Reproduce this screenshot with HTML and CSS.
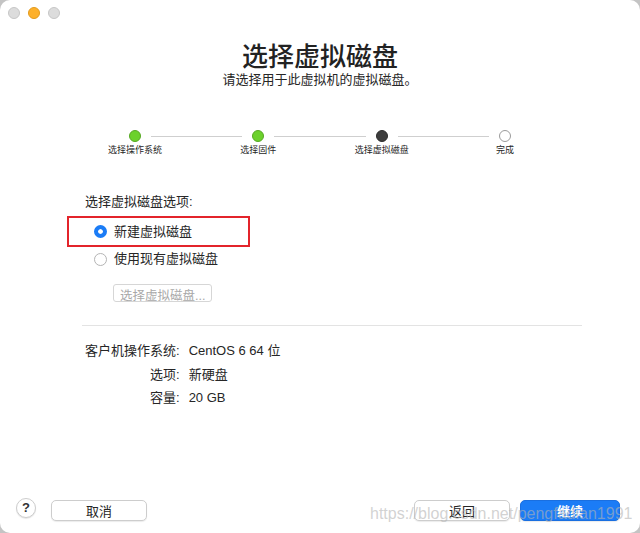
FILE: index.html
```html
<!DOCTYPE html>
<html lang="zh-CN">
<head>
    <meta charset="UTF-8">
    <meta name="viewport" content="width=device-width, initial-scale=1.0">
    <title>选择虚拟磁盘</title>
    <link rel="stylesheet" href="styles.css">
</head>
<body>
<div class="window">
    <div class="titlebar">
        <span class="light"></span>
        <span class="light active"></span>
        <span class="light"></span>
    </div>

    <div class="header">
        <h1>选择虚拟磁盘</h1>
        <p>请选择用于此虚拟机的虚拟磁盘。</p>
    </div>

    <div class="steps">
        <div class="step">
            <span class="dot done"></span>
            <span class="step-label">选择操作系统</span>
        </div>
        <span class="line"></span>
        <div class="step">
            <span class="dot done"></span>
            <span class="step-label">选择固件</span>
        </div>
        <span class="line"></span>
        <div class="step">
            <span class="dot current"></span>
            <span class="step-label">选择虚拟磁盘</span>
        </div>
        <span class="line"></span>
        <div class="step">
            <span class="dot"></span>
            <span class="step-label">完成</span>
        </div>
    </div>

    <div class="options">
        <div class="options-title">选择虚拟磁盘选项:</div>
        <label class="option marked">
            <span class="radio checked"></span>
            新建虚拟磁盘
        </label>
        <label class="option">
            <span class="radio"></span>
            使用现有虚拟磁盘
        </label>
        <button class="pick" disabled>选择虚拟磁盘...</button>
    </div>

    <hr class="divider">

    <div class="summary">
        <span class="key">客户机操作系统:</span><span>CentOS 6 64 位</span>
        <span class="key">选项:</span><span>新硬盘</span>
        <span class="key">容量:</span><span>20 GB</span>
    </div>

    <div class="footer">
        <button class="help">?</button>
        <button class="btn">取消</button>
        <span class="spacer"></span>
        <button class="btn">返回</button>
        <button class="btn primary">继续</button>
    </div>

    <div class="watermark">https://blog.csdn.net/pengfadian1991</div>
</div>
</body>
</html>
```

FILE: styles.css
```css
* {
    box-sizing: border-box;
    margin: 0;
    padding: 0;
}
body {
    width: 640px;
    height: 533px;
    overflow: hidden;
    font-family: "Liberation Sans", "Noto Sans CJK SC", sans-serif;
    color: #262626;
    background-color: #c4c4c4;
}
.window {
    position: relative;
    display: flex;
    flex-direction: column;
    height: 533px;
    background-color: #fff;
    border-radius: 10px;
    overflow: hidden;
}
.titlebar {
    display: flex;
    gap: 8px;
    height: 26px;
    padding: 7px 0 0 8px;
}
.light {
    width: 12px;
    height: 12px;
    border-radius: 50%;
    background-color: #dcdcdc;
    border: 1px solid #c6c6c6;
}
.light.active {
    background-color: #fdb02a;
    border-color: #e29a1c;
}
.header {
    text-align: center;
    padding-top: 16px;
}
.header h1 {
    font-size: 26px;
    font-weight: 500;
    line-height: 30px;
    color: #222;
}
.header p {
    font-size: 13px;
    line-height: 16px;
}
.steps {
    display: flex;
    align-items: flex-start;
    width: 382px;
    margin: 42px 0 0 129px;
}
.step {
    display: flex;
    flex-direction: column;
    align-items: center;
    width: 12px;
}
.dot {
    width: 12px;
    height: 12px;
    border-radius: 50%;
    background-color: #fff;
    border: 1px solid #9a9a9a;
}
.dot.done {
    background-color: #6cd12c;
    border-color: #56a823;
}
.dot.current {
    background-color: #3d3d3d;
    border-color: #2c2c2c;
}
.step-label {
    margin-top: 2px;
    font-size: 9px;
    line-height: 12px;
    white-space: nowrap;
}
.line {
    flex: 1;
    height: 1px;
    margin: 6px 10px 0;
    background-color: #cfcfcf;
}
.options {
    display: flex;
    flex-direction: column;
    align-items: flex-start;
    padding-left: 85px;
    margin-top: 37px;
    font-size: 13px;
}
.options-title {
    line-height: 18px;
}
.option {
    display: flex;
    align-items: center;
    gap: 7px;
    height: 20px;
    margin: 2px 0 0 9px;
    line-height: 20px;
}
.option.marked {
    height: 31px;
    width: 183px;
    margin: 5px 0 0 -18px;
    padding-left: 25px;
    border: 2px solid #e3242b;
}
.radio {
    width: 13px;
    height: 13px;
    border-radius: 50%;
    background-color: #fff;
    border: 1px solid #b4b4b4;
}
.radio.checked {
    background-color: #1b7cf6;
    border: 4px solid #1b7cf6;
    box-shadow: inset 0 0 0 3px #fff;
}
.pick {
    height: 18px;
    margin: 15px 0 0 28px;
    padding: 0 6px;
    font-family: inherit;
    font-size: 12.5px;
    color: #a8a8a8;
    background-color: #fff;
    border: 1px solid #d6d6d6;
    border-radius: 3px;
}
.divider {
    width: 500px;
    margin: 23px 0 0 82px;
    border: none;
    border-top: 1px solid #e3e3e3;
}
.summary {
    display: grid;
    grid-template-columns: auto 1fr;
    column-gap: 9px;
    margin: 13px 0 0 85px;
    font-size: 13px;
    line-height: 23.5px;
}
.key {
    text-align: right;
}
.footer {
    display: flex;
    align-items: center;
    margin-top: auto;
    padding: 0 20px 12px 16px;
}
.help {
    width: 20px;
    height: 20px;
    margin-top: -6px;
    margin-right: 15px;
    border-radius: 50%;
    font-family: inherit;
    font-size: 13px;
    font-weight: bold;
    color: #333;
    background-color: #fff;
    border: 1px solid #cdcdcd;
    box-shadow: 0 1px 1px rgba(0, 0, 0, 0.1);
}
.btn {
    width: 96px;
    height: 21px;
    font-family: inherit;
    font-size: 13px;
    color: #262626;
    background-color: #fff;
    border: 1px solid #cdcdcd;
    border-radius: 5px;
    box-shadow: 0 1px 1px rgba(0, 0, 0, 0.08);
}
.btn.primary {
    width: 100px;
    margin-left: 10px;
    color: #fff;
    font-weight: bold;
    background-color: #1b7cf6;
    border-color: #1a6fe0;
}
.spacer {
    flex: 1;
}
.watermark {
    position: absolute;
    left: 370px;
    bottom: 10px;
    font-size: 16px;
    color: rgba(180, 180, 180, 0.6);
    white-space: nowrap;
}
```
